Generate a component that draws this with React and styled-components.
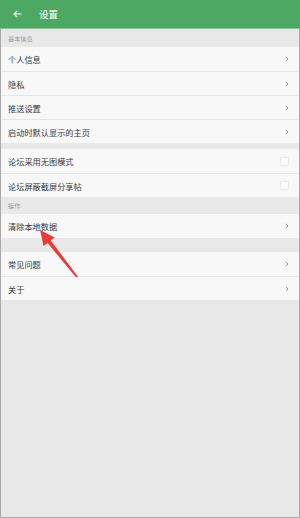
import React from 'react'
import styled, { createGlobalStyle } from 'styled-components'

const Global = createGlobalStyle`
  html, body {
    margin: 0;
    padding: 0;
    background: #e8e8e8;
  }
  body {
    font-family: "Noto Sans CJK SC", "Noto Sans", sans-serif;
  }
`

const Page = styled.div`
  position: relative;
  width: 300px;
  height: 518px;
  display: flex;
  flex-direction: column;
  background: #e8e8e8;
  overflow: hidden;
`

const Header = styled.header`
  height: 29px;
  box-sizing: border-box;
  background: #4ca862;
  border-bottom: 1px solid #86c997;
  display: flex;
  align-items: center;
  padding-left: 13px;
  gap: 17px;
  color: #fff;
  font-size: 9.5px;
`

const Body = styled.main`
  flex: 1;
  display: flex;
  flex-direction: column;
  border: 1px solid #a9a9a9;
  border-top: none;
`

const SectionLabel = styled.div`
  height: ${p => p.h}px;
  box-sizing: border-box;
  display: flex;
  align-items: flex-end;
  padding: 0 0 4px 7px;
  font-size: 6.2px;
  color: #9a9a9a;
`

const Gap = styled.div`
  height: ${p => p.h}px;
`

const Group = styled.section`
  background: #f8f8f8;
  display: flex;
  flex-direction: column;
`

const Row = styled.div`
  height: 24px;
  box-sizing: border-box;
  display: flex;
  align-items: center;
  justify-content: space-between;
  padding: 0 10px 0 7px;
  font-size: 8.2px;
  color: #3a3a3a;
  & + & {
    border-top: 1px solid #e6e6e6;
  }
`

const Check = styled.span`
  width: 9px;
  height: 9px;
  box-sizing: border-box;
  border: 1px solid #ececec;
  border-radius: 1px;
  background: #fbfbfb;
`

const ArrowMark = styled.svg`
  position: absolute;
  left: 34px;
  top: 224px;
  pointer-events: none;
`

const Back = () => (
  <svg width="9" height="8" viewBox="0 0 9 8" fill="none" stroke="#fff" strokeWidth="1.2">
    <path d="M8.5 4H1M4.2 0.8L1 4l3.2 3.2" />
  </svg>
)

const Chevron = () => (
  <svg width="4" height="6" viewBox="0 0 4 6" fill="none" stroke="#8a8a8a" strokeWidth="0.9">
    <path d="M1 0.8L3 3 1 5.2" />
  </svg>
)

const Item = ({ label, check }) => (
  <Row>
    <span>{label}</span>
    {check ? <Check /> : <Chevron />}
  </Row>
)

export default function App() {
  return (
    <>
      <Global />
      <Page>
        <Header>
          <Back />
          <span>设置</span>
        </Header>
        <Body>
          <SectionLabel h={18}>基本信息</SectionLabel>
          <Group>
            <Item label="个人信息" />
            <Item label="隐私" />
            <Item label="推送设置" />
            <Item label="启动时默认显示的主页" />
          </Group>
          <Gap h={6} />
          <Group>
            <Item label="论坛采用无图模式" check />
            <Item label="论坛屏蔽截屏分享帖" check />
          </Group>
          <SectionLabel h={17}>操作</SectionLabel>
          <Group>
            <Item label="清除本地数据" />
          </Group>
          <Gap h={14} />
          <Group>
            <Item label="常见问题" />
            <Item label="关于" />
          </Group>
        </Body>
        <ArrowMark width="50" height="60" viewBox="0 0 50 60">
          <polygon
            fill="#ec3a36"
            points="6,6 20.7,13.6 16.7,16.6 43.8,52.4 42.2,53.6 13.6,19.1 9.6,22.1"
          />
        </ArrowMark>
      </Page>
    </>
  )
}
